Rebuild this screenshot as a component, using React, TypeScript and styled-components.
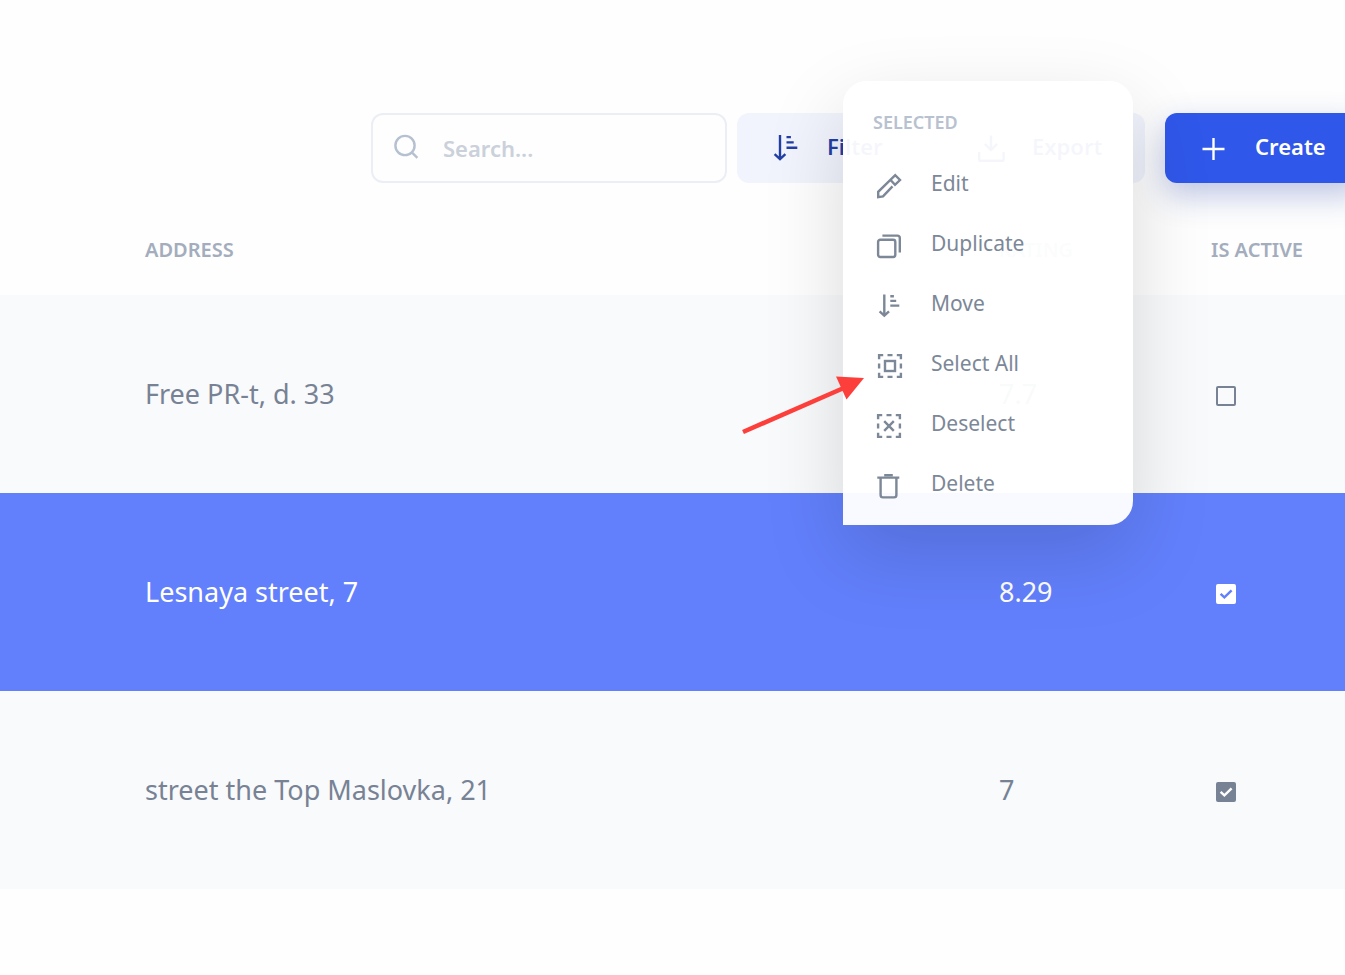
import React from "react";
import styled, { createGlobalStyle, css } from "styled-components";

const GlobalStyle = createGlobalStyle`
  *, *::before, *::after { box-sizing: border-box; }
  body {
    margin: 0;
    background: #fefefe;
    font-family: "Noto Sans", "Open Sans", sans-serif;
    color: #778294;
  }
  button, input { font-family: inherit; }
`;

const Page = styled.div`
  position: relative;
  min-height: 100vh;
  overflow-x: clip;
`;

const Toolbar = styled.header`
  display: flex;
  align-items: stretch;
  padding: 113px 0 0 371px;
  margin-right: -20px;
  height: 183px;
`;

const SearchBox = styled.label`
  flex: 1;
  min-width: 0;
  display: flex;
  align-items: center;
  gap: 24px;
  padding: 0 20px;
  margin-right: 10px;
  border: 2px solid #ebeff5;
  border-radius: 12px;
  color: #b5c0d0;
`;

const SearchInput = styled.input`
  flex: 1;
  min-width: 0;
  border: 0;
  outline: 0;
  padding: 0;
  background: transparent;
  color: #778294;
  font-size: 22px;
  font-weight: 600;
  &::placeholder { color: #cbd1da; opacity: 1; }
`;

const ActionButton = styled.button<{ $width: number; $primary?: boolean }>`
  flex: 0 0 ${(p) => p.$width}px;
  display: flex;
  align-items: center;
  gap: 28px;
  padding: 0 0 0 36px;
  border: 0;
  border-radius: 12px;
  background: #f1f4fc;
  color: #233fa6;
  font-size: 22px;
  font-weight: 600;
  & + & { margin-left: 20px; }
  ${(p) =>
    p.$primary &&
    css`
      background: #2f57e9;
      color: #fff;
      box-shadow: 0 12px 32px rgba(35, 63, 166, 0.3);
    `}
`;

const ButtonLabel = styled.span`
  padding-bottom: 4px;
`;

const Icon = styled.svg`
  flex: none;
  display: block;
  width: 26px;
  height: 26px;
  fill: none;
  stroke: currentColor;
  stroke-width: 2.4;
  overflow: visible;
`;

const Table = styled.table`
  width: 100%;
  border-collapse: collapse;
  table-layout: fixed;
  text-align: left;
`;

const HeadCell = styled.th<{ $width?: number; $indent?: boolean }>`
  width: ${(p) => (p.$width ? `${p.$width}px` : "auto")};
  height: 112px;
  padding: 51px 0 0 ${(p) => (p.$indent ? 145 : 0)}px;
  vertical-align: top;
  line-height: 32px;
  font-size: 20px;
  font-weight: 600;
  color: #a3adbd;
  white-space: nowrap;
`;

const Row = styled.tr<{ $selected?: boolean }>`
  height: 198px;
  background: ${(p) => (p.$selected ? "#6280fc" : "#f9fafc")};
  color: ${(p) => (p.$selected ? "#fff" : "#778294")};
`;

const Cell = styled.td<{ $indent?: boolean }>`
  padding: 0 0 2px ${(p) => (p.$indent ? 145 : 0)}px;
  font-size: 27px;
`;

const CheckWrap = styled.label`
  display: inline-grid;
  vertical-align: middle;
  width: 20px;
  height: 20px;
  margin: 0 0 0 5px;
  & > * { grid-area: 1 / 1; }
`;

const CheckInput = styled.input`
  appearance: none;
  width: 20px;
  height: 20px;
  margin: 0;
  border: 2px solid currentColor;
  border-radius: 2px;
  color: inherit;
  &:checked { background: currentColor; }
  & + svg { visibility: hidden; }
  &:checked + svg { visibility: visible; }
`;

const CheckMark = styled.svg<{ $color: string }>`
  width: 20px;
  height: 20px;
  fill: none;
  stroke: ${(p) => p.$color};
  stroke-width: 2.4;
  pointer-events: none;
`;

const Menu = styled.aside`
  position: absolute;
  top: 81px;
  right: 212px;
  width: 290px;
  padding: 26px 0 11px;
  border-radius: 24px 24px 24px 0;
  background: rgba(255, 255, 255, 0.955);
  box-shadow: 0 30px 80px rgba(0, 0, 0, 0.15);
`;

const MenuTitle = styled.h2`
  margin: 0 0 17px;
  padding-left: 30px;
  font-size: 18px;
  line-height: 30px;
  font-weight: 600;
  color: #b7c1cf;
`;

const MenuList = styled.ul`
  list-style: none;
  margin: 0;
  padding: 0;
`;

const MenuItem = styled.button`
  display: flex;
  align-items: center;
  gap: 29px;
  width: 100%;
  height: 60px;
  padding: 4px 0 0 33px;
  border: 0;
  background: transparent;
  color: #7c8797;
  font-size: 21px;
  text-align: left;
`;

const MenuLabel = styled.span`
  padding-bottom: 6px;
`;

const Pointer = styled.svg`
  position: absolute;
  top: 290px;
  left: -105px;
  width: 130px;
  height: 66px;
  pointer-events: none;
`;

const SearchIcon = () => (
  <Icon viewBox="0 0 26 26">
    <circle cx="12" cy="10.5" r="9.6" />
    <path d="M18.8 17.3L24.4 22.8" />
  </Icon>
);

const SortIcon = () => (
  <Icon viewBox="0 0 26 26">
    <path d="M7 0V24M1.6 19.2L7 24.2L12.4 19.2" />
    <path d="M13.5 2.1h4.4M13.5 7.4h7.2M13.500 12.700h10.800" />
  </Icon>
);

const MoveIcon = () => (
  <Icon viewBox="0 0 26 26">
    <path d="M8.300 1.500V22M3.600 18.400L8.300 22.700L13 18.400" />
    <path d="M14.300 3.200h3.600M14.300 7.900h5.900M14.300 12.600h9" />
  </Icon>
);

const DownloadIcon = () => (
  <Icon viewBox="0 0 26 26">
    <path d="M13 0.500V14.500M6.800 8.800L13 15L19.200 8.800M1.200 17V24.400q0 1.400 1.400 1.400H24.200q1.400 0 1.400-1.400V17" />
  </Icon>
);

const PlusIcon = () => (
  <Icon viewBox="0 0 26 26">
    <path d="M12.5 3V25M1.5 14H23.5" />
  </Icon>
);

const PencilIcon = () => (
  <Icon viewBox="0 0 26 26">
    <path d="M16.500 13.400L7 23.400L2.200 24.200V18.800L19.200 2.200L24 7L19 11.800L14.600 7" />
  </Icon>
);

const CopyIcon = () => (
  <Icon viewBox="0 0 26 26">
    <rect x="2.1" y="6.8" width="17.200" height="17.200" rx="2.200" />
    <path d="M6.4 2.600H21.300q2.500 0 2.500 2.500V19.600" />
  </Icon>
);

const DashedFrame = () => (
  <path d="M2.1 6.2V2.1H6.2M19.8 2.1H23.9V6.2M23.9 19.8V23.9H19.8M6.2 23.9H2.1V19.8M10.5 2.1h5M10.5 23.9h5M2.1 10.5v5M23.9 10.5v5" />
);

const SelectAllIcon = () => (
  <Icon viewBox="0 0 26 26">
    <g transform="translate(1 0)">
      <DashedFrame />
      <rect x="8" y="8" width="10" height="10" />
    </g>
  </Icon>
);

const DeselectIcon = () => (
  <Icon viewBox="0 0 26 26">
    <DashedFrame />
    <path d="M8.2 8.2L17.8 17.8M17.8 8.2L8.2 17.8" />
  </Icon>
);

const TrashIcon = () => (
  <Icon viewBox="0 0 26 26">
    <path d="M1.3 4.6H23.3M8.2 2.1H16.8M4.6 4.6V22q0 2.4 2.4 2.4H18q2.4 0 2.4-2.4V4.6" />
  </Icon>
);

const menuItems = [
  { label: "Edit", icon: <PencilIcon /> },
  { label: "Duplicate", icon: <CopyIcon /> },
  { label: "Move", icon: <MoveIcon /> },
  { label: "Select All", icon: <SelectAllIcon /> },
  { label: "Deselect", icon: <DeselectIcon /> },
  { label: "Delete", icon: <TrashIcon /> },
];

const rows = [
  { address: "Free PR-t, d. 33", rating: "7.7", active: false, selected: false },
  { address: "Lesnaya street, 7", rating: "8.29", active: true, selected: true },
  { address: "street the Top Maslovka, 21", rating: "7", active: true, selected: false },
];

export default function App() {
  return (
    <>
      <GlobalStyle />
      <Page>
        <Toolbar>
          <SearchBox>
            <SearchIcon />
            <SearchInput type="search" placeholder="Search..." aria-label="Search" />
          </SearchBox>
          <ActionButton $width={185}>
            <SortIcon />
            <ButtonLabel>Filter</ButtonLabel>
          </ActionButton>
          <ActionButton $width={203}>
            <DownloadIcon />
            <ButtonLabel>Export</ButtonLabel>
          </ActionButton>
          <ActionButton $width={200} $primary>
            <PlusIcon />
            <ButtonLabel>Create</ButtonLabel>
          </ActionButton>
        </Toolbar>

        <Table>
          <thead>
            <tr>
              <HeadCell $indent>ADDRESS</HeadCell>
              <HeadCell $width={212}>RATING</HeadCell>
              <HeadCell $width={134}>IS ACTIVE</HeadCell>
            </tr>
          </thead>
          <tbody>
            {rows.map((row) => (
              <Row key={row.address} $selected={row.selected}>
                <Cell $indent>{row.address}</Cell>
                <Cell>{row.rating}</Cell>
                <Cell>
                  <CheckWrap>
                    <CheckInput
                      type="checkbox"
                      defaultChecked={row.active}
                      aria-label={`${row.address} is active`}
                    />
                    <CheckMark viewBox="0 0 20 20" $color={row.selected ? "#6280fc" : "#fff"}>
                      <path d="M4.6 9.8L8.4 13.4L15.6 6.4" />
                    </CheckMark>
                  </CheckWrap>
                </Cell>
              </Row>
            ))}
          </tbody>
        </Table>

        <Menu>
          <MenuTitle>SELECTED</MenuTitle>
          <MenuList>
            {menuItems.map((item) => (
              <li key={item.label}>
                <MenuItem>
                  {item.icon}
                  <MenuLabel>{item.label}</MenuLabel>
                </MenuItem>
              </li>
            ))}
          </MenuList>
          <Pointer viewBox="0 0 130 66" aria-hidden="true">
            <path d="M5 61L108 16" stroke="#fd3f3b" strokeWidth="4.6" />
            <path d="M98 5.5L126 7L108.5 28.5Z" fill="#fd3f3b" />
          </Pointer>
        </Menu>
      </Page>
    </>
  );
}
